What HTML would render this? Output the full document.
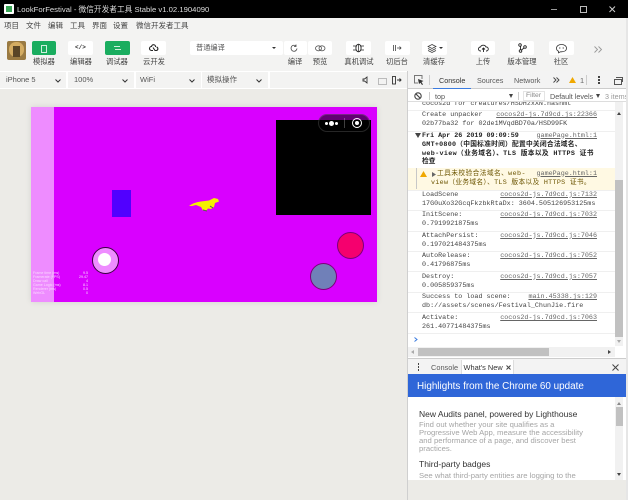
<!DOCTYPE html>
<html><head><meta charset="utf-8">
<style>
html,body{margin:0;padding:0}
body{width:628px;height:500px;overflow:hidden;position:relative;background:#f3f3f2;font-family:"Liberation Sans","Noto Sans CJK SC",sans-serif;color:#333}
.a{position:absolute;white-space:nowrap}
.t{position:absolute;white-space:nowrap;font-size:7.5px;line-height:10px;color:#444}
.b{position:absolute;top:41px;height:14px;background:#fff;border-radius:2px}
.l{position:absolute;top:57px;font-size:7.3px;line-height:10px;text-align:center;color:#444;white-space:nowrap;transform:translateX(-50%)}
.c{position:absolute;top:72px;height:16px;background:#f3f3f2}
.m{position:absolute;white-space:nowrap;font-family:"Liberation Mono","Noto Sans CJK SC",monospace;font-size:6.72px;line-height:9px;color:#444}
.u{position:absolute;white-space:nowrap;font-family:"Liberation Mono",monospace;font-size:6.72px;line-height:9px;color:#666;text-decoration:underline;right:31px}
.s{position:absolute;left:408px;width:207px;height:1px;background:#efefef}
svg{position:absolute;overflow:visible}
</style></head><body>

<!-- title bar -->
<div class="a" style="left:0;top:0;width:628px;height:18px;background:#000"></div>
<div class="a" style="left:4px;top:4px;width:10px;height:10px;background:#fff;border-radius:1px"></div>
<div class="a" style="left:6px;top:6px;width:6px;height:6px;background:#3aa757"></div>
<div class="a" style="left:17px;top:4px;font-size:7.7px;line-height:11px;color:#ddd">LookForFestival - 微信开发者工具 Stable v1.02.1904090</div>
<div class="a" style="left:551px;top:9px;width:6px;height:1px;background:#999"></div>
<div class="a" style="left:580px;top:6px;width:5px;height:5px;border:1px solid #bbb"></div>
<svg style="left:609px;top:6px" width="7" height="7"><path d="M.5 .5L6 6M6 .5L.5 6" stroke="#ccc" stroke-width="1"/></svg>

<!-- menu -->
<div class="t" style="left:4px;top:21px;color:#444">项目</div>
<div class="t" style="left:26px;top:21px">文件</div>
<div class="t" style="left:48px;top:21px">编辑</div>
<div class="t" style="left:70px;top:21px">工具</div>
<div class="t" style="left:92px;top:21px">界面</div>
<div class="t" style="left:113px;top:21px">设置</div>
<div class="t" style="left:136px;top:21px">微信开发者工具</div>

<!-- toolbar -->
<div class="a" style="left:7px;top:41px;width:19px;height:19px;background:#9a7a42;border-radius:2px"></div>
<div class="a" style="left:9px;top:42px;width:15px;height:15px;background:#d4ac62;border-radius:7px"></div>
<div class="a" style="left:13px;top:46px;width:7px;height:11px;background:#5a4526"></div>

<div class="b" style="left:32px;width:24px;background:#1aad5f"></div>
<div class="a" style="left:41px;top:45px;width:4px;height:6px;border:1px solid #cfeedd"></div>
<div class="l" style="left:44px">模拟器</div>
<div class="b" style="left:68px;width:25px"></div>
<div class="a" style="left:75px;top:43px;font:bold 6px/10px 'Liberation Mono',monospace;color:#333">&lt;/&gt;</div>
<div class="l" style="left:81px">编辑器</div>
<div class="b" style="left:105px;width:25px;background:#1aad5f"></div>
<svg style="left:114px;top:45px" width="7" height="6"><path d="M0 1.5H6M1 4.5H7" stroke="#cfeedd" stroke-width="1"/></svg>
<div class="l" style="left:117px">调试器</div>
<div class="b" style="left:141px;width:25px"></div>
<svg style="left:149px;top:44px" width="10" height="8"><path d="M4 6.5H2.5A2 2 0 0 1 2.5 2.5 2 2 0 0 1 6.5 3M4 3.5L6 6.5H7.5A1.8 1.8 0 0 0 7.5 3" fill="none" stroke="#222" stroke-width="1.1"/></svg>
<div class="l" style="left:154px">云开发</div>

<div class="b" style="left:190px;width:93px"></div>
<div class="a" style="left:196px;top:43px;font-size:7.2px;line-height:10px;color:#555">普通编译</div>
<div class="a" style="left:272px;top:47px;border:2px solid transparent;border-top:2.5px solid #333"></div>
<div class="b" style="left:284px;width:23px"></div>
<svg style="left:290px;top:44px" width="9" height="9"><path d="M7 4.5A3 3 0 1 1 6 2M6 .5V2.5H4" fill="none" stroke="#444" stroke-width=".8"/></svg>
<div class="l" style="left:295px">编译</div>
<div class="b" style="left:308px;width:24px"></div>
<svg style="left:315px;top:45px" width="11" height="7"><ellipse cx="3.5" cy="3.3" rx="3" ry="2.5" fill="none" stroke="#555" stroke-width=".8"/><ellipse cx="7" cy="3.3" rx="3" ry="2.5" fill="none" stroke="#555" stroke-width=".8"/></svg>
<div class="l" style="left:320px">预览</div>

<div class="b" style="left:346px;width:25px"></div>
<svg style="left:353px;top:43px" width="11" height="10"><ellipse cx="5.5" cy="5" rx="2.6" ry="3.8" fill="none" stroke="#222" stroke-width=".9"/><path d="M5.5 1V9M0 3H3M8 3H11M0 7H3M8 7H11" stroke="#222" stroke-width=".7"/></svg>
<div class="l" style="left:359px">真机调试</div>
<div class="b" style="left:385px;width:25px"></div>
<svg style="left:393px;top:44px" width="9" height="8"><path d="M.5 1V7M2.5 1V7M4 4H8M6.5 2.5L8 4L6.5 5.5" fill="none" stroke="#444" stroke-width=".8"/></svg>
<div class="l" style="left:397px">切后台</div>
<div class="b" style="left:422px;width:25px"></div>
<svg style="left:427px;top:44px" width="10" height="9"><path d="M5 .5L9 2.5L5 4.5L1 2.5ZM1 4.5L5 6.5L9 4.5M1 6.5L5 8.5L9 6.5" fill="none" stroke="#333" stroke-width=".7"/></svg>
<div class="a" style="left:439px;top:47px;border:2px solid transparent;border-top:2.5px solid #333"></div>
<div class="l" style="left:434px">清缓存</div>
<div class="b" style="left:471px;width:24px"></div>
<svg style="left:478px;top:44px" width="11" height="8"><path d="M3 7H2.5A2 2 0 0 1 2.5 3 3 3 0 0 1 8 3 2 2 0 0 1 8.5 7H8M5.5 8V4M4 5.5L5.5 4L7 5.5" fill="none" stroke="#222" stroke-width=".9"/></svg>
<div class="l" style="left:483px">上传</div>
<div class="b" style="left:510px;width:24px"></div>
<svg style="left:518px;top:43px" width="9" height="10"><circle cx="2" cy="2" r="1.3" fill="none" stroke="#222" stroke-width=".9"/><circle cx="2.5" cy="8" r="1.3" fill="none" stroke="#222" stroke-width=".9"/><circle cx="7" cy="4" r="1.3" fill="none" stroke="#222" stroke-width=".9"/><path d="M2.5 3.3V6.7M3.5 7L6 5" stroke="#222" stroke-width=".9"/></svg>
<div class="l" style="left:522px">版本管理</div>
<div class="b" style="left:549px;width:25px"></div>
<svg style="left:556px;top:44px" width="11" height="9"><path d="M5.5 .5C8.5 .5 10.5 2 10.5 4.2S8.5 7.8 5.5 7.8H4.5L2.5 8.8V7.2C1.2 6.6 .5 5.5 .5 4.2 .5 2 2.5 .5 5.5 .5Z" fill="none" stroke="#333" stroke-width=".8"/><circle cx="3.8" cy="4" r=".6" fill="#333"/><circle cx="7.2" cy="4" r=".6" fill="#333"/></svg>
<div class="l" style="left:561px">社区</div>
<svg style="left:594px;top:46px" width="9" height="7"><path d="M.5 .5L3.5 3.5L.5 6.5M4.5 .5L7.5 3.5L4.5 6.5" fill="none" stroke="#999" stroke-width=".9"/></svg>

<!-- device bar -->
<div class="a" style="left:0;top:71px;width:408px;height:18px;background:#fff"></div>
<div class="c" style="left:0;width:66px"></div>
<div class="c" style="left:68px;width:66px"></div>
<div class="c" style="left:136px;width:65px"></div>
<div class="c" style="left:202px;width:66px"></div>
<div class="c" style="left:270px;width:137px"></div>
<div class="t" style="left:6px;top:75px;color:#555">iPhone 5</div>
<div class="t" style="left:74px;top:75px;color:#555">100%</div>
<div class="t" style="left:140px;top:75px;color:#555">WiFi</div>
<div class="t" style="left:207px;top:75px;color:#555">模拟操作</div>
<svg style="left:55px;top:79px" width="6" height="4"><path d="M.5 .5L3 3L5.5 .5" fill="none" stroke="#333"/></svg>
<svg style="left:122px;top:79px" width="6" height="4"><path d="M.5 .5L3 3L5.5 .5" fill="none" stroke="#333"/></svg>
<svg style="left:189px;top:79px" width="6" height="4"><path d="M.5 .5L3 3L5.5 .5" fill="none" stroke="#333"/></svg>
<svg style="left:256px;top:79px" width="6" height="4"><path d="M.5 .5L3 3L5.5 .5" fill="none" stroke="#333"/></svg>
<svg style="left:362px;top:76px" width="6" height="8"><path d="M1 3H2.5L5 1V7L2.5 5H1Z" fill="none" stroke="#333" stroke-width=".9"/></svg>
<div class="a" style="left:378px;top:78px;width:7px;height:5px;border:1px solid #bbb"></div>
<svg style="left:392px;top:76px" width="10" height="9"><rect x=".5" y=".5" width="3" height="7.5" fill="none" stroke="#333" stroke-width=".9"/><path d="M5 4H9M7.5 2.5L9 4L7.5 5.5" fill="none" stroke="#333"/></svg>

<!-- simulator area -->
<div class="a" style="left:0;top:89px;width:408px;height:411px;background:#ecebe7"></div>
<div class="a" style="left:31px;top:107px;width:346px;height:195px;background:#d900ff;box-shadow:0 0 6px rgba(0,0,0,.1)"></div>
<div class="a" style="left:31px;top:107px;width:23px;height:195px;background:#ee8cff"></div>
<div class="a" style="left:112px;top:190px;width:19px;height:27px;background:#5100ff"></div>
<svg style="left:188px;top:197px" width="32" height="16"><path d="M1 9C5 6 9 5 13 4.500L21 3.500 26 1 30 2 31 4.500 27 6 26 10 23 12 20 11.500 18 14 15 13.500 13 10 8 8 4 9Z" fill="#f4f000"/><path d="M15 13L19 14M22 9L25 11" stroke="#555" stroke-width="1"/></svg>
<div class="a" style="left:91.500px;top:246.500px;width:25px;height:25px;border-radius:50%;background:#ee8cff;border:.7px solid #3a0040"></div>
<div class="a" style="left:98px;top:253px;width:13px;height:13px;border-radius:50%;background:#fff"></div>
<div class="a" style="left:337px;top:232px;width:25px;height:25px;border-radius:50%;background:#f5006e;border:.7px solid #7a0078"></div>
<div class="a" style="left:310px;top:263px;width:25px;height:25px;border-radius:50%;background:#7080b8;border:.7px solid #7a0078"></div>
<div class="a" style="left:276px;top:120px;width:95px;height:95px;background:#000"></div>
<div class="a" style="left:318px;top:114px;width:52px;height:18px;border-radius:10px;background:rgba(0,0,0,.55);border:.7px solid rgba(255,255,255,.15);box-sizing:border-box"></div>
<div class="a" style="left:325px;top:121.500px;width:3px;height:3px;border-radius:50%;background:#fff"></div>
<div class="a" style="left:329px;top:120.500px;width:5px;height:5px;border-radius:50%;background:#fff"></div>
<div class="a" style="left:335px;top:121.500px;width:3px;height:3px;border-radius:50%;background:#fff"></div>
<div class="a" style="left:344px;top:118px;width:1px;height:10px;background:rgba(255,255,255,.25)"></div>
<div class="a" style="left:352px;top:118px;width:8px;height:8px;border:1px solid #fff;border-radius:50%"></div>
<div class="a" style="left:355px;top:121px;width:4px;height:4px;background:#fff;border-radius:50%"></div>
<div class="a" style="left:33px;top:271px;font-size:3.6px;line-height:4.1px;color:#fbd8ff">Frame time (ms)<br>Framerate (FPS)<br>Draw call<br>Game Logic (ms)<br>Renderer (ms)<br>WebGL</div>
<div class="a" style="left:76px;top:271px;width:12px;text-align:right;font-size:3.6px;line-height:4.1px;color:#fbd8ff">9.5<br>29.47<br>4<br>8.1<br>0.5<br>0</div>

<!-- devtools -->
<div class="a" style="left:407px;top:71px;width:221px;height:429px;background:#fff"></div>
<div class="a" style="left:407px;top:71px;width:1px;height:429px;background:#cfcfcf"></div>
<div class="a" style="left:408px;top:71px;width:220px;height:17px;background:#f3f3f3;border-bottom:1px solid #ccc"></div>
<svg style="left:414px;top:75px" width="10" height="10"><path d="M4 8H.5V.5H8V4" fill="none" stroke="#777"/><path d="M4 4L9.5 6L7.5 7L9 9.5 8 10 6.500 7.700 5 9Z" fill="#333"/></svg>
<div class="a" style="left:429px;top:75px;width:1px;height:10px;background:#ccc"></div>
<div class="a" style="left:439px;top:75px;font-size:7.2px;line-height:11px;color:#333">Console</div>
<div class="a" style="left:433px;top:87.500px;width:38px;height:1.500px;background:#3a7be0"></div>
<div class="a" style="left:477px;top:75px;font-size:7.2px;line-height:11px;color:#5a5a5a">Sources</div>
<div class="a" style="left:514px;top:75px;font-size:7.2px;line-height:11px;color:#5a5a5a">Network</div>
<svg style="left:553px;top:77px" width="7" height="6"><path d="M.5 .5L3 3L.5 5.500M3.500 .5L6 3L3.500 5.500" fill="none" stroke="#444" stroke-width=".9"/></svg>
<svg style="left:569px;top:77px" width="7" height="6"><path d="M3.500 0L7 6H0Z" fill="#f0a800"/></svg>
<div class="a" style="left:580px;top:75px;font-size:7.4px;line-height:11px;color:#666">1</div>
<div class="a" style="left:586px;top:75px;width:1px;height:10px;background:#ccc"></div>
<div class="a" style="left:598px;top:76px;width:1.500px;height:1.500px;background:#444;box-shadow:0 3px 0 #444,0 6px 0 #444"></div>
<div class="a" style="left:614px;top:79px;width:6px;height:4px;border:1px solid #555"></div>
<div class="a" style="left:616px;top:77px;width:6px;height:4px;border:1px solid #555;border-left:0;border-bottom:0"></div>

<!-- console -->
<div class="m" style="left:422px;top:100px;color:#444">cocos2d for creatures/HSDHzxXN.hashmt</div>
<div class="a" style="left:408px;top:89px;width:220px;height:13px;background:#fff;border-bottom:1px solid #ddd;box-sizing:border-box"></div>
<svg style="left:414px;top:92px" width="8" height="8"><circle cx="4" cy="4" r="3.200" fill="none" stroke="#444" stroke-width="1.100"/><path d="M1.800 1.800L6.200 6.200" stroke="#444" stroke-width="1.100"/></svg>
<div class="a" style="left:429px;top:92px;width:1px;height:8px;background:#ccc"></div>
<div class="a" style="left:435px;top:92px;font-size:7.200px;line-height:10px;color:#555">top</div>
<div class="a" style="left:509px;top:94px;border:2.500px solid transparent;border-top:4px solid #444"></div>
<div class="a" style="left:518px;top:92px;width:1px;height:8px;background:#ccc"></div>
<div class="a" style="left:523px;top:91px;width:22px;height:10px;border:1px solid #e4e4e4;box-sizing:border-box;font-size:6.800px;line-height:8px;padding-left:2px;color:#888">Filter</div>
<div class="a" style="left:550px;top:92px;font-size:7.200px;line-height:10px;color:#555">Default levels</div>
<div class="a" style="left:596px;top:94px;border:2.500px solid transparent;border-top:4px solid #444"></div>
<div class="a" style="left:605px;top:92px;width:23px;overflow:hidden;font-size:7.200px;line-height:10px;color:#999">3 items</div>

<div class="s" style="top:110px"></div>
<div class="m" style="left:422px;top:111px">Create unpacker</div><div class="u" style="top:111px">cocos2d-js.7d9cd.js:22366</div>
<div class="m" style="left:422px;top:120px">02b77ba32 for 02de1MVqdBD70a/HSD99FK</div>
<div class="s" style="top:131px"></div>
<svg style="left:415px;top:133px" width="6" height="5"><path d="M0 0H6L3 5Z" fill="#444"/></svg>
<div class="m" style="left:422px;top:131.500px;font-weight:bold;color:#222">Fri Apr 26 2019 09:09:59</div><div class="u" style="top:131.500px">gamePage.html:1</div>
<div class="m" style="left:422px;top:140.500px;font-weight:bold;color:#222;letter-spacing:.25px">GMT+0800（中国标准时间）配置中关闭合法域名、</div>
<div class="m" style="left:422px;top:149.500px;font-weight:bold;color:#222;letter-spacing:.35px">web-view（业务域名）、TLS 版本以及 HTTPS 证书</div>
<div class="m" style="left:422px;top:158px;font-weight:bold;color:#222">检查</div>
<div class="a" style="left:408px;top:167.500px;width:207px;height:22px;background:#fff9e3"></div>
<div class="a" style="left:416px;top:168px;width:1px;height:21px;background:#c8c8c8"></div>
<svg style="left:420px;top:171px" width="7" height="6"><path d="M3.500 0L7 6H0Z" fill="#f0a800"/></svg>
<svg style="left:432px;top:172px" width="4" height="5"><path d="M0 0L4 2.500L0 5Z" fill="#666"/></svg>
<div class="m" style="left:437px;top:169.500px;color:#6b5400;letter-spacing:.4px">工具未校验合法域名、web-</div><div class="u" style="top:169.500px">gamePage.html:1</div>
<div class="m" style="left:431px;top:178.500px;color:#6b5400;letter-spacing:.3px">view（业务域名）、TLS 版本以及 HTTPS 证书。</div>
<div class="s" style="top:190px"></div>
<div class="m" style="left:422px;top:190.500px">LoadScene</div><div class="u" style="top:190.500px">cocos2d-js.7d9cd.js:7132</div>
<div class="m" style="left:422px;top:199.500px">17G0uXo32GcqFkzbkRtaDx: 3604.505126953125ms</div>
<div class="s" style="top:210px"></div>
<div class="m" style="left:422px;top:211px">InitScene:</div><div class="u" style="top:211px">cocos2d-js.7d9cd.js:7032</div>
<div class="m" style="left:422px;top:220px">0.7919921875ms</div>
<div class="s" style="top:231px"></div>
<div class="m" style="left:422px;top:231.500px">AttachPersist:</div><div class="u" style="top:231.500px">cocos2d-js.7d9cd.js:7046</div>
<div class="m" style="left:422px;top:240.500px">0.197021484375ms</div>
<div class="s" style="top:251px"></div>
<div class="m" style="left:422px;top:252px">AutoRelease:</div><div class="u" style="top:252px">cocos2d-js.7d9cd.js:7052</div>
<div class="m" style="left:422px;top:261px">0.41796875ms</div>
<div class="s" style="top:271px"></div>
<div class="m" style="left:422px;top:272.500px">Destroy:</div><div class="u" style="top:272.500px">cocos2d-js.7d9cd.js:7057</div>
<div class="m" style="left:422px;top:281.500px">0.005859375ms</div>
<div class="s" style="top:292px"></div>
<div class="m" style="left:422px;top:293px">Success to load scene:</div><div class="u" style="top:293px">main.45338.js:129</div>
<div class="m" style="left:422px;top:302px">db://assets/scenes/Festival_ChunJie.fire</div>
<div class="s" style="top:312px"></div>
<div class="m" style="left:422px;top:314px">Activate:</div><div class="u" style="top:314px">cocos2d-js.7d9cd.js:7063</div>
<div class="m" style="left:422px;top:323px">261.40771484375ms</div>
<div class="s" style="top:333px"></div>
<svg style="left:414px;top:337px" width="4" height="5"><path d="M.5 .5L3 2.500L.5 4.500" fill="none" stroke="#3a7be0"/></svg>

<!-- console scrollbars -->
<div class="a" style="left:615px;top:102px;width:8px;height:244px;background:#f1f1f1"></div>
<div class="a" style="left:615px;top:180px;width:8px;height:157px;background:#c1c1c1"></div>
<div class="a" style="left:617px;top:110px;border:2px solid transparent;border-bottom:3px solid #444"></div>
<div class="a" style="left:617px;top:340px;border:2px solid transparent;border-top:3px solid #aaa"></div>
<div class="a" style="left:408px;top:347px;width:207px;height:10px;background:#f1f1f1"></div>
<div class="a" style="left:418px;top:348px;width:131px;height:8px;background:#c1c1c1"></div>
<div class="a" style="left:411px;top:350px;border:2px solid transparent;border-right:3px solid #aaa;border-left:0"></div>
<div class="a" style="left:608px;top:350px;border:2px solid transparent;border-left:3px solid #444;border-right:0"></div>
<div class="a" style="left:408px;top:358px;width:220px;height:1px;background:#ccc"></div>

<!-- drawer -->
<div class="a" style="left:408px;top:359px;width:220px;height:15px;background:#f3f3f3"></div>
<div class="a" style="left:417.500px;top:363px;width:1.500px;height:1.500px;background:#444;box-shadow:0 3px 0 #444,0 6px 0 #444"></div>
<div class="a" style="left:431px;top:362px;font-size:7.400px;line-height:11px;color:#5a5a5a">Console</div>
<div class="a" style="left:461px;top:360px;width:53px;height:14px;background:#fff;border-left:1px solid #ddd;border-right:1px solid #ddd;box-sizing:border-box"></div>
<div class="a" style="left:463.500px;top:362px;font-size:7.400px;line-height:11px;color:#333">What's New</div>
<svg style="left:506px;top:365px" width="5" height="5"><path d="M.5 .5L4.500 4.500M4.500 .5L.5 4.500" stroke="#444"/></svg>
<svg style="left:612px;top:364px" width="7" height="7"><path d="M.5 .5L6.500 6.500M6.500 .5L.5 6.500" stroke="#444" stroke-width="1"/></svg>
<div class="a" style="left:408px;top:374px;width:220px;height:23px;background:#2f66d8"></div>
<div class="a" style="left:417px;top:380px;font-size:9.900px;line-height:13px;color:#fff">Highlights from the Chrome 60 update</div>
<div class="a" style="left:408px;top:397px;width:220px;height:83px;background:#fff"></div>
<div class="a" style="left:419px;top:408px;font-size:8.500px;line-height:12px;color:#333">New Audits panel, powered by Lighthouse</div>
<div class="a" style="left:419px;top:421px;font-size:7.700px;line-height:8px;color:#a5a5a5">Find out whether your site qualifies as a<br>Progressive Web App, measure the accessibility<br>and performance of a page, and discover best<br>practices.</div>
<div class="a" style="left:419px;top:458px;font-size:8.500px;line-height:12px;color:#333">Third-party badges</div>
<div class="a" style="left:419px;top:472px;font-size:7.700px;line-height:8px;color:#a5a5a5">See what third-party entities are logging to the</div>
<div class="a" style="left:615px;top:397px;width:8px;height:83px;background:#f1f1f1"></div>
<div class="a" style="left:616px;top:407px;width:7px;height:19px;background:#c1c1c1"></div>
<div class="a" style="left:617px;top:400px;border:2px solid transparent;border-bottom:3px solid #888"></div>
<div class="a" style="left:617px;top:473px;border:2px solid transparent;border-top:3px solid #444"></div>
<div class="a" style="left:408px;top:480px;width:220px;height:20px;background:#ecebe7"></div>
<div class="a" style="left:626px;top:18px;width:2px;height:482px;background:#e6e6e6"></div>
</body></html>
